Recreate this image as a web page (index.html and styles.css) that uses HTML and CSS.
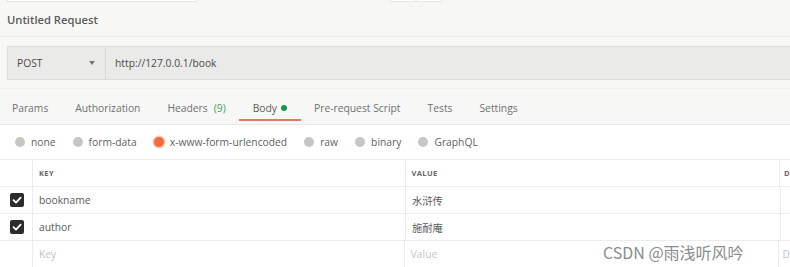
FILE: index.html
```html
<!DOCTYPE html>
<html lang="zh-CN">
<head>
  <meta charset="UTF-8" />
  <title>Untitled Request</title>
  <link rel="stylesheet" href="styles.css">
</head>
<body>
  <div class="top-strip">
    <div class="strip-tab wide"></div>
    <div class="strip-tab small"></div>
    <div class="strip-tab small"></div>
  </div>

  <div class="title">Untitled Request</div>

  <div class="url-bar">
    <div class="method">
      <span>POST</span>
      <span class="caret"></span>
    </div>
    <div class="url">http://127.0.0.1/book</div>
  </div>

  <div class="tabs">
    <div class="tab">Params</div>
    <div class="tab">Authorization</div>
    <div class="tab">Headers <span class="count">(9)</span></div>
    <div class="tab active">Body <span class="dot"></span></div>
    <div class="tab">Pre-request Script</div>
    <div class="tab">Tests</div>
    <div class="tab">Settings</div>
  </div>

  <div class="body-types">
    <label class="radio"><span class="circle"></span>none</label>
    <label class="radio"><span class="circle"></span>form-data</label>
    <label class="radio"><span class="circle on"></span>x-www-form-urlencoded</label>
    <label class="radio"><span class="circle"></span>raw</label>
    <label class="radio"><span class="circle"></span>binary</label>
    <label class="radio"><span class="circle"></span>GraphQL</label>
  </div>

  <div class="table">
    <div class="row head">
      <div class="cell check"></div>
      <div class="cell key">KEY</div>
      <div class="cell value">VALUE</div>
      <div class="cell desc">D</div>
    </div>
    <div class="row">
      <div class="cell check"><span class="box"><svg viewBox="0 0 14 14"><path d="M3.5 7.2 L6 9.6 L10.6 4.6" fill="none" stroke="#fff" stroke-width="1.8" stroke-linecap="round" stroke-linejoin="round"/></svg></span></div>
      <div class="cell key">bookname</div>
      <div class="cell value">水浒传</div>
      <div class="cell desc"></div>
    </div>
    <div class="row">
      <div class="cell check"><span class="box"><svg viewBox="0 0 14 14"><path d="M3.5 7.2 L6 9.6 L10.6 4.6" fill="none" stroke="#fff" stroke-width="1.8" stroke-linecap="round" stroke-linejoin="round"/></svg></span></div>
      <div class="cell key">author</div>
      <div class="cell value">施耐庵</div>
      <div class="cell desc"></div>
    </div>
    <div class="row">
      <div class="cell check"></div>
      <div class="cell key placeholder">Key</div>
      <div class="cell value placeholder">Value</div>
      <div class="cell desc placeholder">D</div>
    </div>
  </div>

  <div class="watermark">CSDN @雨浅听风吟</div>
</body>
</html>
```

FILE: styles.css
```css
body {
  margin: 0;
  width: 790px;
  height: 267px;
  overflow: hidden;
  position: relative;
  background: #f7f8f6;
  font-family: "Open Sans", "Noto Sans CJK SC", sans-serif;
  font-size: 10.3px;
  color: #5a5a5a;
}
.top-strip {
  display: flex;
  height: 3px;
}
.strip-tab {
  height: 1px;
  background: #fff;
  border: 1px solid #e6e7e5;
  border-top: none;
}
.strip-tab.wide {
  margin-left: 7px;
  width: 188px;
}
.strip-tab.small {
  width: 24px;
}
.strip-tab.small:nth-child(2) {
  margin-left: 193px;
}
.title {
  height: 33px;
  line-height: 33px;
  padding-left: 7px;
  font-size: 11.2px;
  font-weight: 600;
  color: #5a5a5a;
  border-bottom: 1px solid #ebecea;
}
.url-bar {
  display: flex;
  margin: 9px 0 0 7px;
  height: 32px;
  background: #eaebe9;
  border: 1px solid #dddedc;
  border-right: none;
}
.method {
  width: 98px;
  display: flex;
  align-items: center;
  justify-content: space-between;
  padding: 0 10px 0 9px;
  box-sizing: border-box;
  border-right: 1px solid #d8d9d7;
  color: #4a4a4a;
}
.caret {
  width: 0;
  height: 0;
  border-left: 3.5px solid transparent;
  border-right: 3.5px solid transparent;
  border-top: 4px solid #777;
}
.url {
  display: flex;
  align-items: center;
  padding-left: 9px;
  color: #4a4a4a;
}
.tabs {
  display: flex;
  margin-top: 8px;
  height: 37px;
  border-top: 1px solid #f0f1ef;
  border-bottom: 1px solid #e8e9e7;
  box-sizing: border-box;
}
.tab {
  display: flex;
  align-items: center;
  gap: 4px;
  padding: 2px 13.5px 0;
  color: #707070;
}
.tab:first-child {
  margin-left: -1.5px;
}
.tab.active {
  color: #5a5a5a;
  box-shadow: inset 0 -3px 0 #f7f8f6, inset 0 -5px 0 #e07a5f;
}
.count {
  margin-left: 2px;
  color: #3aa066;
}
.dot {
  width: 6px;
  height: 6px;
  border-radius: 50%;
  background: #19944a;
}
.body-types {
  display: flex;
  align-items: center;
  height: 34px;
  padding-left: 15px;
  background: #fff;
  gap: 17px;
}
.radio {
  display: flex;
  align-items: center;
  gap: 6px;
  color: #5f5f5f;
}
.circle {
  width: 10px;
  height: 10px;
  border-radius: 50%;
  background: #c6c6c6;
}
.circle.on {
  background: #f26b3a;
  box-shadow: 0 0 0 1.5px #f5c8b6;
}
.table {
  background: #fff;
  border-top: 1px solid #ececec;
}
.row {
  display: flex;
  height: 27px;
  border-bottom: 1px solid #ececec;
  box-sizing: border-box;
}
.cell {
  display: flex;
  align-items: center;
  box-sizing: border-box;
}
.check {
  width: 33px;
  justify-content: center;
  padding-left: 1px;
  border-right: 1px solid #ececec;
}
.key {
  width: 373px;
  padding-left: 6px;
  border-right: 1px solid #ececec;
}
.value {
  width: 375px;
  padding-left: 6px;
  border-right: 1px solid #ececec;
}
.desc {
  flex: 1;
  padding-left: 4px;
}
.head .cell {
  font-size: 7.5px;
  font-weight: 700;
  letter-spacing: 0.4px;
  color: #666;
}
.placeholder {
  color: #c4c4c4;
}
.box {
  width: 14px;
  height: 14px;
  border-radius: 2px;
  background: #2d2d2d;
  display: flex;
}
.box svg {
  width: 14px;
  height: 14px;
}
.watermark {
  position: absolute;
  left: 603px;
  top: 240px;
  font-family: "Noto Sans CJK SC", sans-serif;
  font-size: 16px;
  color: #8c8c8c;
  white-space: nowrap;
}
```
